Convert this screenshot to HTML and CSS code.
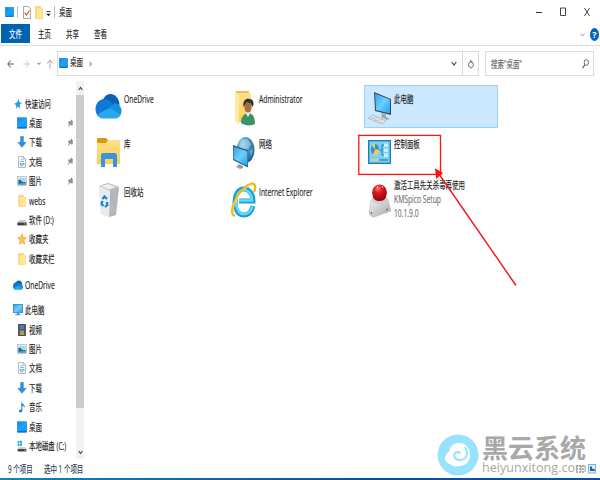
FILE: index.html
```html
<!DOCTYPE html>
<html lang="zh-CN">

<head>
    <meta charset="UTF-8">
    <meta name="viewport" content="width=device-width, initial-scale=1.0">
    <title>桌面</title>

    <link rel="stylesheet" href="styles.css">
</head>

<body>

    <!-- Iconos compartidos -->
    <svg class="sprite">
        <defs>
            <linearGradient id="blue" x1="0" y1="0" x2="1" y2="1">
                <stop offset="0" stop-color="#0a84e8" />
                <stop offset=".5" stop-color="#18a4ff" />
                <stop offset="1" stop-color="#0890f4" />
            </linearGradient>
            <linearGradient id="yellow" x1="0" y1="0" x2="0" y2="1">
                <stop offset="0" stop-color="#ffe08a" />
                <stop offset="1" stop-color="#fbcf58" />
            </linearGradient>
            <linearGradient id="screen" x1="0" y1="0" x2="1" y2="1">
                <stop offset="0" stop-color="#2f9fe8" />
                <stop offset=".5" stop-color="#6bd0ff" />
                <stop offset="1" stop-color="#229de8" />
            </linearGradient>
            <linearGradient id="metal" x1="0" y1="0" x2="1" y2="1">
                <stop offset="0" stop-color="#f2f2f2" />
                <stop offset="1" stop-color="#a5a9ad" />
            </linearGradient>
            <radialGradient id="red" cx=".4" cy=".25" r=".7">
                <stop offset="0" stop-color="#ff7772" />
                <stop offset=".4" stop-color="#e01820" />
                <stop offset="1" stop-color="#970910" />
            </radialGradient>
            <radialGradient id="globe" cx=".35" cy=".3" r=".8">
                <stop offset="0" stop-color="#b9e2f2" />
                <stop offset=".45" stop-color="#4b97bd" />
                <stop offset="1" stop-color="#145884" />
            </radialGradient>
        </defs>
        <symbol id="i-desktop" viewBox="0 0 9 10">
            <rect x=".3" y=".3" width="8.4" height="9.4" fill="url(#blue)" stroke="#1478c8" stroke-width=".5" />
            <path d="M.5 9.3h8" stroke="#075c9c" stroke-width=".7" />
        </symbol>
        <symbol id="i-down" viewBox="0 0 9 12">
            <path d="M3 .3h3v6h2.8L4.5 11.6.2 6.3H3z" fill="#328de0" stroke="#1c70c4" stroke-width=".3" />
        </symbol>
        <symbol id="i-doc" viewBox="0 0 8 12">
            <path d="M.5.5h5L7.5 3v8.5h-7z" fill="#f4f6f7" stroke="#8a9298" stroke-width=".6" />
            <path d="M5.3.7v2.5h2" fill="none" stroke="#8a9298" stroke-width=".5" />
            <path d="M3 3.7h2M2 5.5h4M2 9.7h3" stroke="#5aaed9" stroke-width=".8" />
            <path d="M1.8 7h1.8v1.8H1.8zM4.3 7h2v1.8h-2z" fill="#62a9cb" />
        </symbol>
        <symbol id="i-pic" viewBox="0 0 10 10">
            <rect x=".4" y=".4" width="9.2" height="9.2" fill="#fff" stroke="#9ba5ab" stroke-width=".6" />
            <path d="M1.4 1.5h7.2v7H1.4z" fill="#a8d7f2" />
            <path d="M1.4 3.8l2 .2 2.6 2.3 2.6-.4v2.6H1.4z" fill="#236891" />
            <path d="M1.4 7.4l7.2-.4v1.5H1.4z" fill="#4ba0ce" />
        </symbol>
        <symbol id="i-folder" viewBox="0 0 8 13">
            <path d="M.4.5h5.2v2h2v10H.4z" fill="#f8d775" stroke="#e6b94b" stroke-width=".4" />
            <path d="M1.6 2.3h6v10.2h-6z" fill="#ffe596" />
        </symbol>
        <symbol id="i-cloud" viewBox="0 0 26 26">
            <path d="M2 13C3 8 7 6 8 6c2-5 9-7 13-2 2 2 3 5 3 8L13 18z" fill="#0762b8" />
            <path d="M8 6C3 7 0 11 0 16c0 5 3 9 7 9l13-9c-3-6-7-10-12-10z" fill="#0f79d5" />
            <path d="M14 15l5-5c4 0 7 4 7 8s-3 7-6 7H14z" fill="#1490df" />
            <path d="M2 22c5-4 9-6 13-7l10 7c-1 2-3 3.5-5 3.5H7c-2 0-4-1.5-5-3.5z" fill="#29a7ea" />
        </symbol>
        <symbol id="i-pin" viewBox="0 0 6 9">
            <path d="M3.6.3l2.200 2.600-.7.5.2 2.500-1 .8-1.500-1.300L.3 8.700l1.200-3.900L.3 3.500l.9-.9 1.900-.3z" fill="#8292a0" />
        </symbol>
        <symbol id="i-monitor" viewBox="0 0 9 11">
            <rect x=".4" y=".5" width="8.2" height="7.5" fill="url(#screen)" stroke="#327bac" stroke-width=".7" />
            <path d="M3.5 8h2v1.500H7v.8H2v-.8h1.500z" fill="#5a8faf" />
        </symbol>
        <symbol id="i-drive" viewBox="0 0 8 6">
            <path d="M1.2.8h5.600L8 3H0z" fill="#c9cdd0" />
            <path d="M0 3h8v2.500H0z" fill="#3b4247" />
            <path d="M5.700 3.800h1.300v.8H5.700z" fill="#55d878" />
        </symbol>
    </svg>

    <div class="window">
        <header class="title-bar">
            <svg class="ic-desk"><use href="#i-desktop" /></svg>
            <i class="divider"></i>
            <svg class="ic-check" viewBox="0 0 8 13">
                <path d="M.5.5h5l2 2.500v9.500h-7z" fill="#fafafa" stroke="#858585" stroke-width=".7" />
                <path d="M1.700 6.700l1.800 2.300 3-4.500" fill="none" stroke="#e3562a" stroke-width="1.200" />
            </svg>
            <svg class="ic-folder"><use href="#i-folder" /></svg>
            <svg class="ic-menu" viewBox="0 0 5 6">
                <path d="M.5.6h4" stroke="#333" />
                <path d="M.3 2.800h4.400L2.500 5.300z" fill="#222" />
            </svg>
            <i class="divider"></i>
            <span class="label">桌面</span>
            <div class="controls">
                <svg width="6" height="10" viewBox="0 0 6 10"><path d="M0 5.500h6" stroke="#333" /></svg>
                <svg width="6" height="10" viewBox="0 0 6 10"><path d="M.5 1h5v7.500h-5z" fill="none" stroke="#333" stroke-width=".9" /></svg>
                <svg width="6" height="10" viewBox="0 0 6 10"><path d="M.4 1l5.200 8M5.600 1L.4 9" fill="none" stroke="#333" stroke-width=".9" /></svg>
            </div>
        </header>

        <nav class="tabs">
            <div class="tab active"><span class="label">文件</span></div>
            <div class="tab"><span class="label">主页</span></div>
            <div class="tab"><span class="label">共享</span></div>
            <div class="tab"><span class="label">查看</span></div>
            <svg class="collapse" viewBox="0 0 5 4"><path d="M.5.5l2 2.500 2-2.500" fill="none" stroke="#888" stroke-width=".8" /></svg>
            <span class="help">?</span>
        </nav>

        <div class="address-bar">
            <svg class="arrows" viewBox="0 0 50 14">
                <g fill="none" stroke-width="1">
                    <path d="M.8 7h6M3.500 3.500L.8 7l2.700 3.500" stroke="#555" />
                    <path d="M16 7h6M19.300 3.500L22 7l-2.700 3.500" stroke="#ccc" />
                    <path d="M30.500 5.500l1.500 2 1.500-2" stroke="#777" />
                    <path d="M43 11.500V3M40.200 6.500L43 3l2.800 3.500" stroke="#aaa" />
                </g>
            </svg>
            <div class="path-box">
                <svg class="ic-desk"><use href="#i-desktop" /></svg>
                <span class="label">桌面</span>
                <svg class="crumb" viewBox="0 0 3 6"><path d="M.5.7L2.300 3 .5 5.300" fill="none" stroke="#444" stroke-width=".8" /></svg>
                <svg class="drop" viewBox="0 0 6 5"><path d="M.7 1L3 4l2.300-3" fill="none" stroke="#444" stroke-width="1.100" /></svg>
                <div class="refresh">
                    <svg viewBox="0 0 6 10"><path d="M1.700 3.100C.3 4 .3 7 1.300 8c1 1.200 2.600 1 3.400-.2.900-1.400.7-3.300-.3-4.300L3 2.800M2.700.7v2.500h2" fill="none" stroke="#555" stroke-width=".9" /></svg>
                </div>
            </div>
            <div class="search-box">
                <span class="label">搜索"桌面"</span>
                <svg viewBox="0 0 7 10"><ellipse cx="4.300" cy="3.500" rx="2.100" ry="2.900" fill="none" stroke="#555" stroke-width=".9" /><path d="M2.800 5.800L.6 9.200" stroke="#555" stroke-width="1.100" /></svg>
            </div>
        </div>

        <main class="content">
            <aside class="sidebar">
                <div class="tree-item root">
                    <svg viewBox="0 0 8 12"><path d="M5 1l.2 3.300L8 5 5.600 6.800l.5 3.600-2.300-1.900L2 10.800l.3-3.500L.2 5.800l2.600-1.200z" fill="#2299e6" /></svg>
                    <span class="label">快速访问</span>
                </div>
                <div class="tree-item"><svg><use href="#i-desktop" /></svg><span class="label">桌面</span><svg class="pin"><use href="#i-pin" /></svg></div>
                <div class="tree-item"><svg><use href="#i-down" /></svg><span class="label">下载</span><svg class="pin"><use href="#i-pin" /></svg></div>
                <div class="tree-item"><svg><use href="#i-doc" /></svg><span class="label">文档</span><svg class="pin"><use href="#i-pin" /></svg></div>
                <div class="tree-item"><svg><use href="#i-pic" /></svg><span class="label">图片</span><svg class="pin"><use href="#i-pin" /></svg></div>
                <div class="tree-item"><svg><use href="#i-folder" /></svg><span class="label latin">webs</span></div>
                <div class="tree-item"><svg class="low"><use href="#i-drive" /></svg><span class="label">软件 (D:)</span></div>
                <div class="tree-item">
                    <svg viewBox="0 0 9 12"><path d="M4.500.7l1.200 3.600 3.100.3-2.400 2.700.7 4-2.600-2-2.600 2 .7-4L.2 4.600l3.100-.3z" fill="#ffc34b" stroke="#e99a2b" stroke-width=".6" /></svg>
                    <span class="label">收藏夹</span>
                </div>
                <div class="tree-item"><svg><use href="#i-folder" /></svg><span class="label">收藏夹栏</span></div>
                <div class="tree-item root cloud"><svg><use href="#i-cloud" /></svg><span class="label latin">OneDrive</span></div>
                <div class="tree-item root pc"><svg><use href="#i-monitor" /></svg><span class="label">此电脑</span></div>
                <div class="tree-item">
                    <svg viewBox="0 0 8 12">
                        <rect width="8" height="12" fill="#45484e" />
                        <path d="M2 1h4v4.500H2z" fill="#4b79bc" />
                        <path d="M2 6.500h4V11H2z" fill="#b59b55" />
                        <path d="M1 .5v11M7 .5v11" stroke="#bbb" stroke-width=".6" stroke-dasharray="1 1" />
                    </svg>
                    <span class="label">视频</span>
                </div>
                <div class="tree-item"><svg><use href="#i-pic" /></svg><span class="label">图片</span></div>
                <div class="tree-item"><svg><use href="#i-doc" /></svg><span class="label">文档</span></div>
                <div class="tree-item"><svg><use href="#i-down" /></svg><span class="label">下载</span></div>
                <div class="tree-item">
                    <svg viewBox="0 0 7 12"><path d="M2.800.5c.5 2.500 3.800 2.600 3.500 6.200-.5-1.200-1.500-1.700-2.400-2V9.500c0 1-1 2-2.100 2S.2 10.800.5 9.800s1.500-1.600 2.300-1.200z" fill="#1686dd" /></svg>
                    <span class="label">音乐</span>
                </div>
                <div class="tree-item"><svg><use href="#i-desktop" /></svg><span class="label">桌面</span></div>
                <div class="tree-item">
                    <svg viewBox="0 0 8 11">
                        <path d="M0 1h1.500v2H0zM2 .8h2V3H2zM0 3.500h1.500v2H0zM2 3.500h2v2H2z" fill="#20aee9" />
                        <path d="M1 6.500h6l1 2H0z" fill="#c9cdd0" />
                        <path d="M0 8.300h8v2.200H0z" fill="#3b4247" />
                        <path d="M5.800 9h1.200v.8H5.800z" fill="#55d878" />
                    </svg>
                    <span class="label">本地磁盘 (C:)</span>
                </div>
            </aside>
            <div class="scrollbar">
                <svg viewBox="0 0 5 5"><path d="M.7 4l1.800-2.600L4.300 4" fill="none" stroke="#444" stroke-width="1.100" /></svg>
                <i class="thumb"></i>
                <svg viewBox="0 0 5 5"><path d="M.7 1l1.800 2.600L4.300 1" fill="none" stroke="#444" stroke-width="1.100" /></svg>
            </div>

            <section class="files">
                <article class="file">
                    <svg class="big-cloud"><use href="#i-cloud" /></svg>
                    <div><span class="label latin">OneDrive</span></div>
                </article>
                <article class="file">
                    <svg viewBox="0 0 27 36">
                        <path d="M5 1h14v28H5z" fill="#eabd55" />
                        <path d="M5 1l4 3v31l-4-4z" fill="#ffe9a7" />
                        <path d="M9 3h12v29H9z" fill="url(#yellow)" />
                        <path d="M11 33c0-6 3-9 6-10 5 0 8 3 8 11-4 2-10 2-14-1z" fill="#3b9269" />
                        <path d="M15 22l3 5 3-5z" fill="#e9eee9" />
                        <ellipse cx="18" cy="17" rx="3.700" ry="5.500" fill="#a66e43" />
                        <path d="M13.500 17c-1-7 3-9 6-8 4 0 5 5 3 8l-2-4-4-1z" fill="#30302f" />
                    </svg>
                    <div><span class="label latin">Administrator</span></div>
                </article>
                <article class="file selected">
                    <svg viewBox="0 0 27 36">
                        <path d="M9 2l17 7v16l-16-4z" fill="#3b464d" />
                        <path d="M10 3.500l15 6v14L11 20z" fill="url(#screen)" />
                        <path d="M17 23l4 1v3l4 2-3 1-6-3z" fill="#9caab2" />
                        <path d="M3 28l5-3 13 6-4 3z" fill="#e7eaec" stroke="#98a1a7" stroke-width=".6" />
                        <path d="M6 27l12 6M5 29l10-2M9 31l9-2" stroke="#adb5ba" stroke-width=".6" />
                    </svg>
                    <div><span class="label">此电脑</span></div>
                </article>
                <article class="file">
                    <svg viewBox="0 0 27 36">
                        <path d="M2 4c0-1 0-2 1-2h8l2 2v4H2z" fill="#d99a10" />
                        <path d="M2 7h9l2-3h11c1 0 1 1 1 2v22H2z" fill="url(#yellow)" />
                        <path d="M6 31V20c0-2 1-3 2-3h12c1 0 2 1 2 3v11h-4v-8h-8v8z" fill="#3794df" />
                    </svg>
                    <div><span class="label">库</span></div>
                </article>
                <article class="file">
                    <svg viewBox="0 0 27 36">
                        <ellipse cx="15.500" cy="14" rx="9" ry="13" fill="url(#globe)" />
                        <path d="M11 4l6-1 4 5-3 5-4-2-4 2zM20 15l3-2-2 8z" fill="#9bd5ea" opacity=".6" />
                        <path d="M3 9l15 5.500v17L3 24z" fill="#34536a" />
                        <path d="M3.500 10.500l14 5V30l-14-7z" fill="url(#screen)" />
                        <path d="M9 28l4 2v2l-3 1-4-2z" fill="#8fa0aa" />
                    </svg>
                    <div><span class="label">网络</span></div>
                </article>
                <article class="file">
                    <svg viewBox="0 0 27 36">
                        <rect x="3.500" y="4.500" width="22" height="23" fill="#4fb9ee" stroke="#2b789f" />
                        <rect x="5" y="6" width="19" height="20" fill="#76cff5" />
                        <ellipse cx="10" cy="13.500" rx="4" ry="5.500" fill="#d5eff9" />
                        <path d="M10 13.500V8c-5 0-5 10 0 11 2 0 4-2 4-5.500z" fill="#ffc83d" />
                        <path d="M10 13.500V8c3 0 4 3 4 5.500z" fill="#328fcd" />
                        <path d="M10 13.500L7 9.500c-2 3-1 8 1 9z" fill="#328fcd" />
                        <path d="M14 14h3M17 9v10M17 9h2M17 19h2" stroke="#287eae" fill="none" />
                        <path d="M19 7.500h4V11h-4zM19 12.500h4V16h-4zM19 17.500h4V21h-4z" fill="#c9efff" />
                        <path d="M6 24h8" stroke="#ffd04d" stroke-width="1.500" />
                        <path d="M14 24h9" stroke="#2794cb" stroke-width="1.500" />
                    </svg>
                    <div><span class="label">控制面板</span></div>
                </article>
                <article class="file">
                    <svg viewBox="0 0 27 36">
                        <path d="M4 4l9-3 11 4-3 28-7 2-8-3z" fill="#d9dddf" />
                        <path d="M4 4l9-3 11 4-9 4z" fill="#b8bdc1" />
                        <path d="M6 4l7-2 8 3-7 2.500z" fill="#eceeef" />
                        <path d="M15 9l9-4-3 28-7 2z" fill="#b3b7bb" />
                        <path d="M4 4l11 5-1 26-8-3z" fill="#e8ebed" />
                        <path d="M7.500 17l2-2.500L12 17M12 20l.3 3-2.300 2M8.500 24l-2-2 1-3" fill="none" stroke="#1683d1" stroke-width="2.200" />
                    </svg>
                    <div><span class="label">回收站</span></div>
                </article>
                <article class="file">
                    <svg viewBox="0 0 27 36">
                        <path d="M23 24c-1.500 6-5 9-9 9-6 0-9-6-9-13S8 7 14 7c5 0 9 5 9 12H9" fill="none" stroke="#189fda" stroke-width="5" />
                        <path d="M22.500 24.500c-1.500 5-5 7.500-8.500 7.500-5 0-8-5.500-8-12S9 8 14 8c4.500 0 8 4.500 8 10.500H9" fill="none" stroke="#6bd5f7" stroke-width="2.600" />
                        <path d="M5 34c-5-1-3-11 2-19C13 4 24-2 25 4c.4 2 0 4-1 6" fill="none" stroke="#efb90c" stroke-width="2.200" />
                        <path d="M4 32c-2-3 0-11 4-17C14 6 22 1 24 4" fill="none" stroke="#ffe35a" stroke-width=".9" />
                    </svg>
                    <div><span class="label latin">Internet Explorer</span></div>
                </article>
                <article class="file">
                    <svg viewBox="0 0 27 36">
                        <path d="M6 18l15-2c1 0 2 1 2 2l3 11-17 6c-2 0-5-2-5-4z" fill="url(#metal)" stroke="#afb2b4" stroke-width=".5" />
                        <ellipse cx="14.500" cy="17" rx="7.500" ry="5" fill="#c7ccd0" />
                        <path d="M8 9v5c0 3 3 5 6.500 5s6.500-2 6.500-5V9z" fill="#aa0710" />
                        <ellipse cx="14.500" cy="10.500" rx="7.400" ry="8" fill="url(#red)" />
                        <path d="M12 6l1-2M17 4l1 2" stroke="#ffd2cd" stroke-width=".8" />
                        <path d="M6 30l1 2M21 28l2-1" stroke="#555" />
                    </svg>
                    <div class="details">
                        <span class="label">激活工具先关杀毒再使用</span>
                        <span class="label latin muted">KMSpico Setup</span>
                        <span class="label latin muted">10.1.9.0</span>
                    </div>
                </article>
            </section>
        </main>

        <footer class="status-bar">
            <span class="label count">9 个项目</span>
            <span class="label">选中 1 个项目</span>
            <svg class="views" viewBox="0 0 22 10">
                <path d="M1 2h2M1 5h2M1 8h2M4 2h2M4 5h2M4 8h2M7 2h2M7 5h2M7 8h2" stroke="#666" />
                <rect x="13.500" y=".5" width="7" height="8.500" fill="#d8effc" stroke="#7eb6d8" />
                <path d="M15 2.500h2v2l3 1V7h-5z" fill="#236891" />
            </svg>
        </footer>
    </div>

    <!-- Marcas sobre la ventana -->
    <svg class="marks" viewBox="0 0 600 480">
        <rect x="358.800" y="135.400" width="81.700" height="39" fill="none" stroke="#fe1212" stroke-width="1.300" />
        <path d="M516 285.500L439 174" stroke="#f31414" stroke-width="1.400" />
        <path d="M435 168.300l8 4.700-6.800 6z" fill="#fe1212" />
    </svg>

    <div class="watermark">
        <svg viewBox="0 0 42 42">
            <circle cx="21" cy="21" r="20.500" fill="#97e3fd" />
            <path d="M21 9c7-1 13 5 12 13 0 6-5 10-11 10-4 1-7 0-9-2-5-1-6-6-4-9 1-2 2-3 3-3 1-5 4-9 9-9z" fill="#fff" />
            <path d="M28 13c4 7 1 13-5 13-5 0-7-4-5-7 2-2 5-1 5 1" fill="none" stroke="#97e3fd" stroke-width="2" />
        </svg>
        <div>
            <span class="brand">黑云系统</span>
            <span class="site">heiyunxitong.com</span>
        </div>
    </div>

</body>

</html>
```

FILE: styles.css
```css
* {
    box-sizing: border-box;
}

body {
    margin: 0;
    width: 600px;
    height: 480px;
    overflow: hidden;
    position: relative;
    background-color: #fff;
    color: #1c1c1c;
    font-family: "Open Sans", "Noto Sans CJK SC", sans-serif;
    font-size: 10px;
}

svg {
    display: block;
    flex: none;
}

.sprite {
    position: absolute;
    width: 0;
    height: 0;
}

.window {
    display: flex;
    flex-direction: column;
    height: 480px;
    background: linear-gradient(to right, #0c87b4, #0b4fa0 60%) bottom / 100% 2px no-repeat;
}

/* Texto estrecho de toda la ventana */
.label {
    display: block;
    line-height: 14px;
    white-space: nowrap;
    transform: scaleX(.645);
    transform-origin: left center;
    -webkit-text-stroke: .15px;
}

.label.latin {
    transform: scaleX(.675);
}

/* Barra de título */
.title-bar {
    display: flex;
    align-items: center;
    height: 24px;
    padding-left: 5px;
}

.ic-desk {
    width: 9px;
    height: 10px;
}

.divider {
    width: 1px;
    height: 12px;
    margin: 0 5px 0 3px;
    background-color: #bbb;
}

.ic-check {
    width: 8px;
    height: 13px;
}

.ic-folder {
    width: 8px;
    height: 13px;
    margin-left: 4px;
}

.ic-menu {
    width: 5px;
    height: 6px;
    margin: 3px 0 0 3px;
}

.title-bar .label {
    margin-left: -1px;
}

.controls {
    display: flex;
    gap: 18px;
    margin-left: auto;
    padding-right: 10px;
}

/* Pestañas */
.tabs {
    display: flex;
    align-items: center;
    height: 22px;
    padding-left: 1px;
    border-bottom: 1px solid #dedede;
}

.tab {
    width: 28px;
    height: 19px;
    margin-bottom: 3px;
    padding: 3px 0 0 8px;
}

.tab.active {
    width: 29px;
    background-color: #0063b1;
    color: #fff;
}

.collapse {
    width: 5px;
    height: 4px;
    margin-left: auto;
}

.help {
    width: 9px;
    height: 13px;
    margin: 0 1px 1px 5px;
    border-radius: 50%;
    background-color: #0065bd;
    color: #fff;
    font-weight: bold;
    font-size: 9px;
    line-height: 13px;
    text-align: center;
}

/* Barra de direcciones */
.address-bar {
    display: flex;
    align-items: center;
    height: 35px;
    padding-left: 7px;
}

.arrows {
    width: 50px;
    height: 14px;
}

.path-box {
    display: flex;
    align-items: center;
    width: 422px;
    height: 25px;
    border: 1px solid #dcdcdc;
    padding-left: 1px;
}

.path-box .label {
    width: 19px;
    margin: -3px 0 0 2px;
}

.path-box .ic-desk {
    margin-top: -1px;
}

.crumb {
    width: 3px;
    height: 6px;
}

.drop {
    width: 6px;
    height: 5px;
    margin-left: auto;
    margin-right: 5px;
}

.refresh {
    display: flex;
    align-items: center;
    justify-content: center;
    width: 16px;
    height: 23px;
    border-left: 1px solid #dcdcdc;
}

.refresh svg {
    width: 6px;
    height: 10px;
}

.search-box {
    display: flex;
    align-items: center;
    justify-content: space-between;
    width: 109px;
    height: 25px;
    margin-left: 6px;
    padding: 0 4px 0 5px;
    border: 1px solid #dcdcdc;
    color: #666;
}

.search-box svg {
    width: 7px;
    height: 10px;
}

/* Panel lateral */
.content {
    display: flex;
    height: 378px;
}

.sidebar {
    width: 76px;
    padding-top: 13px;
}

.tree-item {
    display: flex;
    align-items: center;
    height: 19.4px;
    padding-left: 17px;
}

.tree-item > svg {
    width: 10px;
    height: 12px;
}

.tree-item .label {
    width: 38px;
    margin-left: 2px;
}

.tree-item .pin {
    width: 7px;
    height: 9px;
}

.tree-item > .low {
    height: 7px;
    margin-top: 5px;
}

.tree-item.root {
    padding-left: 13px;
}

.cloud,
.pc {
    margin-top: 6.3px;
}

.scrollbar {
    display: flex;
    flex-direction: column;
    align-items: center;
    justify-content: space-between;
    width: 8px;
    padding: 5px 0 4px;
    background-color: #f1f1f1;
}

.scrollbar svg {
    width: 5px;
    height: 5px;
}

.thumb {
    width: 8px;
    height: 313px;
    margin-top: 4px;
    margin-bottom: auto;
    background-color: #cdcdcd;
}

/* Elementos del escritorio */
.files {
    display: grid;
    grid-template-columns: repeat(3, 135px);
    grid-template-rows: 43px 43px 43px;
    row-gap: 3px;
    align-content: start;
    padding: 4px 0 0 10px;
}

.file {
    display: flex;
    align-items: flex-start;
    width: 134px;
    height: 43px;
    padding-top: 4px;
    border: 1px solid transparent;
}

.file.selected {
    background-color: #cce8ff;
    border-color: #99d1ff;
}

.file > svg {
    width: 27px;
    height: 36px;
}

.file > .big-cloud {
    height: 26px;
    margin-top: 3px;
}

.file > div {
    width: 100px;
    margin-left: 2px;
    padding-top: 2px;
}

.file:nth-child(n+4) > div {
    padding-top: 1px;
}

.file:nth-child(n+7) > div {
    padding-top: 3px;
}

.file:nth-child(9) > .details {
    padding-top: 0;
    margin-top: -4px;
}

.muted {
    color: #707070;
}

/* Barra de estado */
.status-bar {
    display: flex;
    align-items: center;
    height: 19px;
    padding-left: 8px;
    color: #263b55;
}

.count {
    width: 36px;
}

.views {
    width: 22px;
    height: 10px;
    margin-left: auto;
    margin-right: 3px;
}

/* Flecha roja y logotipo */
.marks {
    position: absolute;
    top: 0;
    left: 0;
    width: 600px;
    height: 480px;
}

.watermark {
    position: absolute;
    left: 437px;
    top: 434px;
    display: flex;
    gap: 3px;
    color: #a8a8a8;
}

.watermark svg {
    width: 42px;
    height: 42px;
}

.brand {
    display: block;
    font: bold 26px/26px "Noto Sans CJK SC", sans-serif;
}

.site {
    display: block;
    margin-top: 1px;
    font: 12.6px/14px "Open Sans", sans-serif;
}
```
